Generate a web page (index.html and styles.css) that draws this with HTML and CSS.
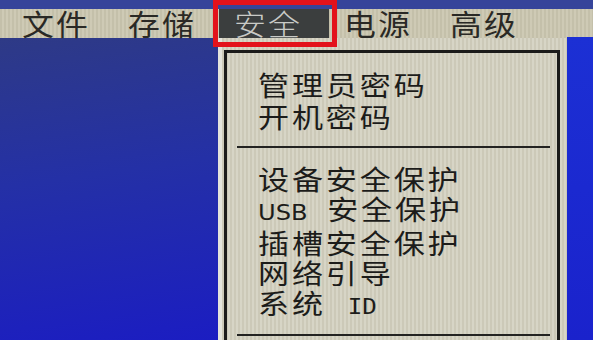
FILE: index.html
```html
<!DOCTYPE html>
<html lang="zh-CN">
  <head>
    <meta charset="UTF-8" />
    <meta name="viewport" content="width=device-width, initial-scale=1.0" />
    <title>安全</title>
    <link rel="stylesheet" href="styles.css">
  </head>
  <body>
    <div class="screen">
      <div class="menubar">
        <span class="menu-item"><span class="label">文件</span></span>
        <span class="menu-item"><span class="label">存储</span></span>
        <span class="menu-item active"><span class="label">安全</span></span>
        <span class="menu-item"><span class="label">电源</span></span>
        <span class="menu-item"><span class="label">高级</span></span>
      </div>

      <div class="main">
        <div class="desk"></div>

        <div class="dropdown">
          <div class="dropdown-box">
            <ul class="group group-top">
              <li>管理员密码</li>
              <li>开机密码</li>
            </ul>
            <div class="sep"></div>
            <ul class="group group-bottom">
              <li>设备安全保护</li>
              <li><span class="latin">USB</span>安全保护</li>
              <li>插槽安全保护</li>
              <li>网络引导</li>
              <li>系统<span class="mono">ID</span></li>
            </ul>
            <div class="sep"></div>
          </div>
        </div>

        <div class="side"></div>
      </div>
    </div>
  </body>
</html>
```

FILE: styles.css
```css
body {
  margin: 0;
  padding: 0;
  background-color: #1c22c4;
  font-family: "Noto Sans CJK SC", "Noto Sans", sans-serif;
  overflow: hidden;
}

.screen {
  width: 593px;
  height: 340px;
  display: flex;
  flex-direction: column;
}

.menubar {
  height: 38px;
  box-sizing: border-box;
  padding: 9px 0 0 7px;
  display: flex;
  background: linear-gradient(#36449a 0 9px, transparent 9px),
    repeating-linear-gradient(90deg, #c4c0aa 0 2px, #cecab5 2px 4px);
}

.menu-item {
  width: 106px;
  box-sizing: border-box;
  padding-left: 15px;
  height: 29px;
  line-height: 29px;
  font-size: 29px;
  color: #2a2925;
}

/* the BIOS font is wider than it is tall */
.label {
  display: inline-block;
  letter-spacing: 2px;
  transform: scaleX(1.1);
  transform-origin: left;
}

.menu-item.active {
  position: relative;
  width: 110px;
  background-color: #3b3e3e;
  color: #c9cac6;
  font-weight: 300;
}

/* red annotation frame drawn over the screenshot */
.menu-item.active::after {
  content: "";
  position: absolute;
  left: -6px;
  right: -8px;
  top: -9px;
  bottom: -9px;
  border: 5px solid #e3121c;
}

.main {
  flex: 1;
  display: flex;
}

.desk {
  width: 218px;
  background: linear-gradient(172deg, #2e3a86 0%, #2430a6 45%, #1b1dc2 100%);
}

.dropdown {
  width: 349px;
  box-sizing: border-box;
  padding: 12px 7px 0 2px;
  border-left: 4px solid #e4e4dc;
  background: repeating-linear-gradient(90deg, #ccc9b8 0 2px, #d7d5c6 2px 4px);
}

.dropdown-box {
  height: 100%;
  box-sizing: border-box;
  border: 3px solid #1b1b1a;
  border-bottom: none;
}

.group {
  list-style: none;
  margin: 0;
  padding: 0 0 0 31px;
  font-size: 27px;
  color: #1c1c1a;
}

.group li {
  width: 260px;
  white-space: nowrap;
  letter-spacing: 2.5px;
  transform: scaleX(1.15);
  transform-origin: left;
}

.group-top {
  padding-top: 16px;
  line-height: 32px;
}

.group-bottom {
  margin-top: 16px;
  line-height: 30px;
}

.sep {
  height: 2px;
  margin: 13px 7px 0 10px;
  background-color: #232321;
}

.group-bottom + .sep {
  margin-top: 12px;
}

.latin {
  font-family: "DejaVu Sans", sans-serif;
  font-size: 21px;
  letter-spacing: 0;
  margin-right: 17px;
}

.mono {
  font-family: "DejaVu Sans Mono", monospace;
  font-size: 21px;
  letter-spacing: 0;
  margin-left: 19px;
}

.side {
  flex: 1;
  margin-top: -1px;
  background: linear-gradient(#1c30d4, #1a22cc);
}
```
